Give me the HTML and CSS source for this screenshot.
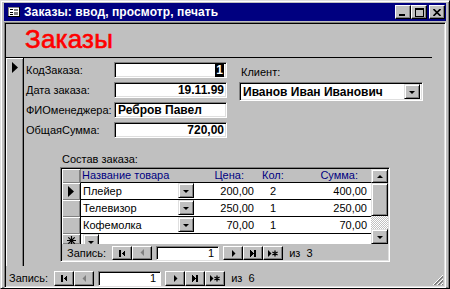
FILE: index.html
```html
<!DOCTYPE html>
<html>
<head>
<meta charset="utf-8">
<link rel="stylesheet" href="styles.css">
</head>
<body>
<div class="window">
  <div class="titlebar">
    <svg class="ticon" width="12" height="10" viewBox="0 0 12 10" shape-rendering="crispEdges">
      <rect x="0" y="0" width="12" height="10" fill="#fff"/>
      <rect x="0" y="0" width="12" height="1" fill="#808080"/>
      <rect x="0" y="0" width="1" height="10" fill="#808080"/>
      <rect x="11" y="0" width="1" height="10" fill="#000"/>
      <rect x="0" y="9" width="12" height="1" fill="#000"/>
      <rect x="2" y="2" width="3" height="1" fill="#000"/>
      <rect x="6" y="2" width="4" height="2" fill="#808080"/>
      <rect x="2" y="5" width="3" height="1" fill="#000"/>
      <rect x="6" y="5" width="4" height="2" fill="#808080"/>
      <rect x="2" y="7" width="3" height="1" fill="#000"/>
      <rect x="6" y="7" width="4" height="1" fill="#808080"/>
    </svg>
    <span class="title">Заказы: ввод, просмотр, печать</span>
    <div class="tbtns">
      <div class="tbtn"><svg width="6" height="2" viewBox="0 0 6 2"><rect width="6" height="2" fill="#000"/></svg></div>
      <div class="tbtn"><svg width="9" height="9" viewBox="0 0 9 9" shape-rendering="crispEdges"><rect x="0" y="0" width="9" height="2" fill="#000"/><rect x="0" y="0" width="1" height="9" fill="#000"/><rect x="8" y="0" width="1" height="9" fill="#000"/><rect x="0" y="8" width="9" height="1" fill="#000"/></svg></div>
      <div class="tbtn close"><svg width="8" height="7" viewBox="0 0 8 7"><path d="M0.5 0 L7.5 7 M7.5 0 L0.5 7" stroke="#000" stroke-width="1.6"/></svg></div>
    </div>
  </div>

  <div class="client">
    <div class="fheader">
      <h1 class="ftitle">Заказы</h1>
    </div>

    <div class="detail">
      <div class="rsel">
        <svg class="rs-arrow" width="6" height="11" viewBox="0 0 6 11"><path d="M0 0 L6 5.5 L0 11 Z" fill="#000"/></svg>
      </div>
      <div class="dbody">
        <div class="top">
          <div class="fields">
            <div class="field"><span class="lbl">КодЗаказа:</span><span class="tb right"><span class="sel">1</span></span></div>
            <div class="field"><span class="lbl">Дата заказа:</span><span class="tb right">19.11.99</span></div>
            <div class="field"><span class="lbl">ФИОменеджера:</span><span class="tb">Ребров Павел</span></div>
            <div class="field"><span class="lbl">ОбщаяСумма:</span><span class="tb right">720,00</span></div>
          </div>
          <div class="clientcol">
            <div class="clbl">Клиент:</div>
            <div class="combo">
              <span class="combo-text">Иванов Иван Иванович</span>
              <span class="dd big"><i class="tri"></i></span>
            </div>
          </div>
        </div>

        <div class="sflabel">Состав заказа:</div>

        <div class="subform">
          <div class="sf-main">
            <div class="sf-records">
              <div class="sf-row sf-head">
                <div class="rs"></div>
                <div class="cells">
                  <span class="c-name">Название товара</span>
                  <span class="c-price">Цена:</span>
                  <span class="c-qty">Кол:</span>
                  <span class="c-sum">Сумма:</span>
                </div>
              </div>
              <div class="sf-row">
                <div class="rs"><svg width="6" height="11" viewBox="0 0 6 11"><path d="M0 0 L6 5.5 L0 11 Z" fill="#000"/></svg></div>
                <div class="cells">
                  <span class="c-name">Плейер<span class="dd"><i class="tri"></i></span></span>
                  <span class="c-price">200,00</span>
                  <span class="c-qty">2</span>
                  <span class="c-sum">400,00</span>
                </div>
              </div>
              <div class="sf-row">
                <div class="rs"></div>
                <div class="cells">
                  <span class="c-name">Телевизор<span class="dd"><i class="tri"></i></span></span>
                  <span class="c-price">250,00</span>
                  <span class="c-qty">1</span>
                  <span class="c-sum">250,00</span>
                </div>
              </div>
              <div class="sf-row">
                <div class="rs"></div>
                <div class="cells">
                  <span class="c-name">Кофемолка<span class="dd"><i class="tri"></i></span></span>
                  <span class="c-price">70,00</span>
                  <span class="c-qty">1</span>
                  <span class="c-sum">70,00</span>
                </div>
              </div>
              <div class="sf-row sf-new">
                <div class="rs"><svg class="ast" width="9" height="9" viewBox="0 0 9 9"><path d="M4.5 0V9M0 4.5H9M1.3 1.3L7.7 7.7M7.7 1.3L1.3 7.7" stroke="#000" stroke-width="1.2"/></svg></div>
                <div class="cells">
                  <span class="c-name"><span class="dd"><i class="tri"></i></span></span>
                </div>
              </div>
            </div>
            <div class="vscroll">
              <div class="sb-btn"><i class="tri-up"></i></div>
              <div class="sb-thumb"></div>
              <div class="sb-track"></div>
              <div class="sb-btn"><i class="tri"></i></div>
            </div>
          </div>
          <div class="nav sf-nav">
            <span class="nav-lbl">Запись:</span>
            <span class="nbtn"><svg width="7" height="7" viewBox="0 0 7 7" shape-rendering="crispEdges"><rect x="0" y="0" width="2" height="7"/><path d="M6 0V7L2.5 3.5Z"/></svg></span>
            <span class="nbtn"><svg width="6" height="8" viewBox="0 0 6 8"><path d="M5 0V7L1.5 3.5Z" fill="#808080"/></svg></span>
            <span class="ntb">1</span>
            <span class="nbtn"><svg width="5" height="7" viewBox="0 0 5 7"><path d="M1 0V7L4.5 3.5Z"/></svg></span>
            <span class="nbtn"><svg width="8" height="7" viewBox="0 0 8 7" shape-rendering="crispEdges"><path d="M1 0V7L4.5 3.5Z"/><rect x="5" y="0" width="2" height="7"/></svg></span>
            <span class="nbtn"><svg width="10" height="7" viewBox="0 0 10 7"><path d="M0 0V7L3.5 3.5Z"/><path d="M7 0.5V6.5M4.4 2L9.6 5M9.6 2L4.4 5" stroke="#000" stroke-width="1.3"/></svg></span>
            <span class="nav-of">из&nbsp; 3</span>
          </div>
        </div>
      </div>
    </div>

    <div class="nav mainnav">
      <span class="nav-lbl">Запись:</span>
      <span class="nbtn"><svg width="7" height="7" viewBox="0 0 7 7" shape-rendering="crispEdges"><rect x="0" y="0" width="2" height="7"/><path d="M6 0V7L2.5 3.5Z"/></svg></span>
      <span class="nbtn"><svg width="6" height="8" viewBox="0 0 6 8"><path d="M5 0V7L1.5 3.5Z" fill="#808080"/></svg></span>
      <span class="ntb">1</span>
      <span class="nbtn"><svg width="5" height="7" viewBox="0 0 5 7"><path d="M1 0V7L4.5 3.5Z"/></svg></span>
      <span class="nbtn"><svg width="8" height="7" viewBox="0 0 8 7" shape-rendering="crispEdges"><path d="M1 0V7L4.5 3.5Z"/><rect x="5" y="0" width="2" height="7"/></svg></span>
      <span class="nbtn"><svg width="10" height="7" viewBox="0 0 10 7"><path d="M0 0V7L3.5 3.5Z"/><path d="M7 0.5V6.5M4.4 2L9.6 5M9.6 2L4.4 5" stroke="#000" stroke-width="1.3"/></svg></span>
      <span class="nav-of">из&nbsp; 6</span>
      <svg class="grip" width="12" height="12" viewBox="0 0 12 12" shape-rendering="crispEdges">
        <path d="M11 1L1 11M11 5L5 11M11 9L9 11" stroke="#fff" stroke-width="1"/>
        <path d="M11 2L2 11M11 3L3 11M11 6L6 11M11 7L7 11M11 10L10 11" stroke="#808080" stroke-width="1"/>
      </svg>
    </div>
  </div>
</div>
</body>
</html>
```

FILE: styles.css
```css
* { box-sizing: border-box; margin: 0; padding: 0; }
html, body { width: 450px; height: 289px; overflow: hidden; background: #c0c0c0; }
body { font-family: "Liberation Sans", Arial, sans-serif; font-size: 11px; color: #000; }

.window {
  width: 450px; height: 289px;
  display: flex; flex-direction: column;
  background: #c0c0c0;
  border-top: 1px solid #dfdfdf; border-left: 1px solid #dfdfdf;
  border-right: 1px solid #000; border-bottom: 1px solid #000;
  box-shadow: inset 1px 1px #fff, inset -1px -1px #808080;
  padding: 2px 3px 0 3px;
}

/* title bar */
.titlebar {
  height: 18px; flex: none;
  background: #000080; color: #fff;
  display: flex; align-items: center;
  padding: 0 1px 0 4px;
}
.ticon { flex: none; margin-right: 4px; }
.title { font-weight: bold; font-size: 12px; white-space: nowrap; letter-spacing: 0.1px; }
.tbtns { margin-left: auto; display: flex; }
.tbtn {
  width: 16px; height: 14px;
  background: #c0c0c0;
  border-top: 1px solid #fff; border-left: 1px solid #fff;
  border-right: 1px solid #000; border-bottom: 1px solid #000;
  box-shadow: inset -1px -1px #808080;
  display: flex; align-items: center; justify-content: center;
}
.tbtn:first-child { align-items: flex-end; padding-bottom: 2px; justify-content: flex-start; padding-left: 3px; }
.tbtn.close { margin-left: 2px; }

/* client area */
.client {
  flex: 1; margin-top: 1px;
  display: flex; flex-direction: column;
  border-top: 1px solid #808080; border-left: 1px solid #808080;
  border-right: 1px solid #fff; border-bottom: 1px solid #fff;
  box-shadow: inset 1px 1px #000, inset -1px -1px #dfdfdf;
  padding: 1px 1px 0 1px;
}
.fheader {
  height: 34px; width: 426px; flex: none;
  border-bottom: 1px solid #000;
  padding-left: 19px;
}
.ftitle {
  font-size: 26px; font-weight: normal; color: #ff0000;
  line-height: 30px; letter-spacing: 0.2px;
  -webkit-text-stroke: 0.6px #ff0000;
}

.detail { flex: 1; display: flex; min-height: 0; }
.rsel {
  width: 18px; flex: none;
  border-right: 1px solid #000;
  box-shadow: inset 1px 1px #fff, inset -1px 0 #808080;
  padding: 4px 0 0 6px;
}
.dbody { flex: 1; padding: 4px 0 0 0; }

.top { display: flex; }
.fields { display: flex; flex-direction: column; gap: 4px; padding-left: 2px; }
.field { display: flex; align-items: center; height: 16px; }
.lbl { width: 88px; flex: none; white-space: nowrap; line-height: 16px; }
.tb {
  width: 113px; height: 16px;
  background: #fff;
  border-top: 1px solid #808080; border-left: 1px solid #808080;
  border-right: 1px solid #fff; border-bottom: 1px solid #fff;
  box-shadow: inset 1px 1px #000, inset -1px -1px #dfdfdf;
  font-weight: bold; font-size: 12px; line-height: 14px;
  padding: 0 2px 0 3px;
  white-space: nowrap;
}
.tb.right { text-align: right; }
.sel { background: #000; color: #fff; padding: 0 1px; }

.clientcol { margin-left: 12px; display: flex; flex-direction: column; }
.clbl { height: 20px; padding: 3px 0 0 2px; line-height: 14px; }
.combo {
  width: 184px; height: 19px;
  display: flex; align-items: center;
  background: #fff;
  border-top: 1px solid #808080; border-left: 1px solid #808080;
  border-right: 1px solid #fff; border-bottom: 1px solid #fff;
  box-shadow: inset 1px 1px #000, inset -1px -1px #dfdfdf;
  padding: 0 2px 0 3px;
}
.combo-text { font-weight: bold; font-size: 12px; flex: 1; white-space: nowrap; }
.dd {
  width: 16px; height: 15px;
  background: #c0c0c0;
  border-top: 1px solid #dfdfdf; border-left: 1px solid #dfdfdf;
  border-right: 1px solid #000; border-bottom: 1px solid #000;
  box-shadow: inset 1px 1px #fff, inset -1px -1px #808080;
  display: inline-flex; align-items: center; justify-content: center;
  flex: none;
}
.tri { width: 0; height: 0; border-left: 3px solid transparent; border-right: 3px solid transparent; border-top: 3px solid #000; margin-top: 1px; }
.tri-up { width: 0; height: 0; border-left: 3px solid transparent; border-right: 3px solid transparent; border-bottom: 3px solid #000; }

.sflabel { margin: 14px 0 0 38px; line-height: 14px; height: 15px; }

.subform {
  margin-left: 36px; width: 330px; height: 95px;
  border-top: 1px solid #808080; border-left: 1px solid #808080;
  border-right: 1px solid #fff; border-bottom: 1px solid #fff;
  box-shadow: inset 1px 1px #000, inset -1px -1px #dfdfdf;
  padding: 1px;
  display: flex; flex-direction: column;
}
.sf-main { display: flex; height: 75px; flex: none; }
.sf-records { width: 309px; overflow: hidden; display: flex; flex-direction: column; }
.sf-row { display: flex; height: 17px; flex: none; }
.sf-row .rs {
  width: 18px; flex: none; overflow: hidden;
  box-shadow: inset 1px 1px #fff, inset -1px -1px #808080;
  display: flex; align-items: center; justify-content: center;
}
.sf-row .cells {
  flex: 1; display: flex;
  background: #fff;
  border-left: 1px solid #000; border-bottom: 1px solid #000;
  line-height: 16px;
}
.sf-head { height: 14px; }
.sf-head .cells { background: #c0c0c0; color: #000080; line-height: 13px; border-left: 1px solid #808080; }
.sf-new { height: 10px; }
.sf-new .cells { border-bottom: none; }
.sf-new .rs { align-items: flex-start; padding-top: 2px; }

.c-name { width: 113px; display: flex; justify-content: space-between; padding-left: 2px; flex: none; }
.c-price { width: 62px; text-align: right; padding-right: 2px; flex: none; }
.c-qty { width: 45px; padding-left: 14px; flex: none; }
.c-sum { width: 69px; text-align: right; padding-right: 3px; flex: none; }
.sf-head .c-name { padding-left: 1px; }
.sf-head .c-price { padding-right: 12px; }
.sf-head .c-qty { padding-left: 6px; }
.sf-head .c-sum { padding-right: 12px; }

.vscroll { width: 17px; display: flex; flex-direction: column; }
.sb-btn {
  height: 14px; flex: none;
  background: #c0c0c0;
  border-top: 1px solid #dfdfdf; border-left: 1px solid #dfdfdf;
  border-right: 1px solid #000; border-bottom: 1px solid #000;
  box-shadow: inset 1px 1px #fff, inset -1px -1px #808080;
  display: flex; align-items: center; justify-content: center;
}
.sb-btn:last-child { height: 15px; }
.sb-thumb {
  height: 33px; flex: none;
  background: #c0c0c0;
  border-top: 1px solid #dfdfdf; border-left: 1px solid #dfdfdf;
  border-right: 1px solid #000; border-bottom: 1px solid #000;
  box-shadow: inset 1px 1px #fff, inset -1px -1px #808080;
}
.sb-track { flex: 1; background: repeating-conic-gradient(#fff 0 25%, #c0c0c0 0 50%) 0 0 / 2px 2px; }

/* navigation bars */
.nav { display: flex; align-items: flex-start; white-space: nowrap; }
.nav-lbl { margin-right: 6px; line-height: 15px; }
.nbtn {
  width: 20px; height: 15px; flex: none;
  background: #c0c0c0;
  border-top: 1px solid #fff; border-left: 1px solid #fff;
  border-right: 1px solid #000; border-bottom: 1px solid #000;
  box-shadow: inset -1px -1px #808080;
  display: inline-flex; align-items: center; justify-content: center;
}
.nbtn svg { fill: #000; }
.ntb {
  width: 63px; height: 15px;
  margin: 0 4px;
  background: #fff;
  border-top: 1px solid #808080; border-left: 1px solid #808080;
  border-right: 1px solid #fff; border-bottom: 1px solid #fff;
  box-shadow: inset 1px 1px #000;
  text-align: right; padding-right: 4px; line-height: 13px;
}
.nav-of { margin-left: 6px; line-height: 15px; }
.sf-nav { flex: 1; padding: 2px 0 0 5px; }
.sf-nav .nbtn, .sf-nav .ntb { height: 14px; }
.sf-nav .nav-lbl, .sf-nav .nav-of { line-height: 14px; }
.mainnav { height: 21px; flex: none; padding: 5px 0 0 3px; position: relative; }
.grip { position: absolute; right: 0; bottom: 1px; }
```
